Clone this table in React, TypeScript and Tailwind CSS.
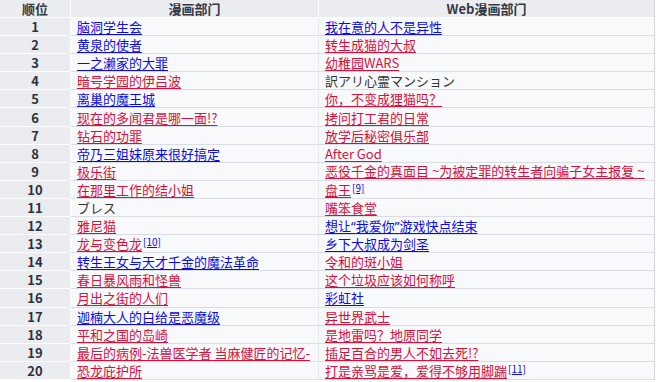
import React from "react";

type Cell = { t: string; c: "b" | "r" | "p"; sup?: string };

const rows: [Cell, Cell][] = [
  [{ t: "脑洞学生会", c: "b" }, { t: "我在意的人不是异性", c: "b" }],
  [{ t: "黄泉的使者", c: "b" }, { t: "转生成猫的大叔", c: "r" }],
  [{ t: "一之濑家的大罪", c: "b" }, { t: "幼稚园WARS", c: "r" }],
  [{ t: "暗号学园的伊吕波", c: "r" }, { t: "訳アリ心霊マンション", c: "p" }],
  [{ t: "离巢的魔王城", c: "b" }, { t: "你，不变成狸猫吗？", c: "r" }],
  [{ t: "现在的多闻君是哪一面!?", c: "r" }, { t: "拷问打工君的日常", c: "r" }],
  [{ t: "钻石的功罪", c: "r" }, { t: "放学后秘密俱乐部", c: "r" }],
  [{ t: "帝乃三姐妹原来很好搞定", c: "b" }, { t: "After God", c: "r" }],
  [{ t: "极乐街", c: "r" }, { t: "恶役千金的真面目 ~为被定罪的转生者向骗子女主报复 ~", c: "r" }],
  [{ t: "在那里工作的结小姐", c: "r" }, { t: "盘王", c: "r", sup: "[9]" }],
  [{ t: "ブレス", c: "p" }, { t: "嘴笨食堂", c: "r" }],
  [{ t: "雅尼猫", c: "r" }, { t: "想让“我爱你”游戏快点结束", c: "b" }],
  [{ t: "龙与变色龙", c: "r", sup: "[10]" }, { t: "乡下大叔成为剑圣", c: "b" }],
  [{ t: "转生王女与天才千金的魔法革命", c: "b" }, { t: "令和的斑小姐", c: "r" }],
  [{ t: "春日暴风雨和怪兽", c: "r" }, { t: "这个垃圾应该如何称呼", c: "r" }],
  [{ t: "月出之街的人们", c: "r" }, { t: "彩虹社", c: "b" }],
  [{ t: "迦楠大人的白给是恶魔级", c: "b" }, { t: "异世界武士", c: "r" }],
  [{ t: "平和之国的岛崎", c: "r" }, { t: "是地雷吗？地原同学", c: "r" }],
  [{ t: "最后的病例-法兽医学者 当麻健匠的记忆-", c: "r" }, { t: "插足百合的男人不如去死!?", c: "r" }],
  [{ t: "恐龙庇护所", c: "r" }, { t: "打是亲骂是爱，爱得不够用脚踹", c: "r", sup: "[11]" }],
];

function renderText(t: string) {
  const parts = t.split(/([“”~])/);
  return parts.map((p, i) =>
    p === "“" || p === "”" || p === "~" ? (
      <span key={i} className="font-['Noto_Sans',sans-serif]">
        {p}
      </span>
    ) : (
      <React.Fragment key={i}>{p}</React.Fragment>
    )
  );
}

function Text({ cell }: { cell: Cell }) {
  const cls =
    cell.c === "b"
      ? "text-[#0b0bea] underline"
      : cell.c === "r"
      ? "text-[#d8103c] underline"
      : "text-[#333]";
  return (
    <span className="whitespace-nowrap">
      <span className={cls + " decoration-1 underline-offset-[2px]"}>{renderText(cell.t)}</span>
      {cell.sup && (
        <sup className="text-[10px] leading-none text-[#0b0bea] underline decoration-1 -top-[3px] ml-[1px]">
          {cell.sup}
        </sup>
      )}
    </span>
  );
}

export default function App() {
  return (
    <div
      className="w-[656px] h-[382px] bg-white text-[13px] leading-[17px]"
      style={{ fontFamily: '"Noto Sans CJK SC", "Noto Sans", sans-serif' }}
    >
      <div className="w-[655px] border-r border-[#d2d5dd]">
        <div className="flex h-[18px] font-bold text-[#343a46]">
          <div className="w-[71px] bg-[#eaecf0] border-r border-b border-white flex items-center justify-center">
            顺位
          </div>
          <div className="w-[248px] bg-[#eaecf0] border-r border-b border-white flex items-center justify-center">
            漫画部门
          </div>
          <div className="flex-1 bg-[#eaecf0] border-b border-white flex items-center justify-center">
            Web漫画部门
          </div>
        </div>
        {rows.map((r, i) => (
          <div key={i} className="flex h-[18.1px]">
            <div className="w-[71px] bg-[#eaecf0] border-r border-b border-white flex items-center justify-center font-bold text-[#2c3240]">
              {i + 1}
            </div>
            <div className="w-[248px] bg-[#f8f9fa] border-r border-b border-r-[#e6e8ee] border-b-[#dadde5] flex items-center pl-[6px] overflow-visible">
              <Text cell={r[0]} />
            </div>
            <div className="flex-1 bg-[#f8f9fa] border-b border-[#dadde5] flex items-center pl-[6px] overflow-visible">
              <Text cell={r[1]} />
            </div>
          </div>
        ))}
      </div>
    </div>
  );
}
